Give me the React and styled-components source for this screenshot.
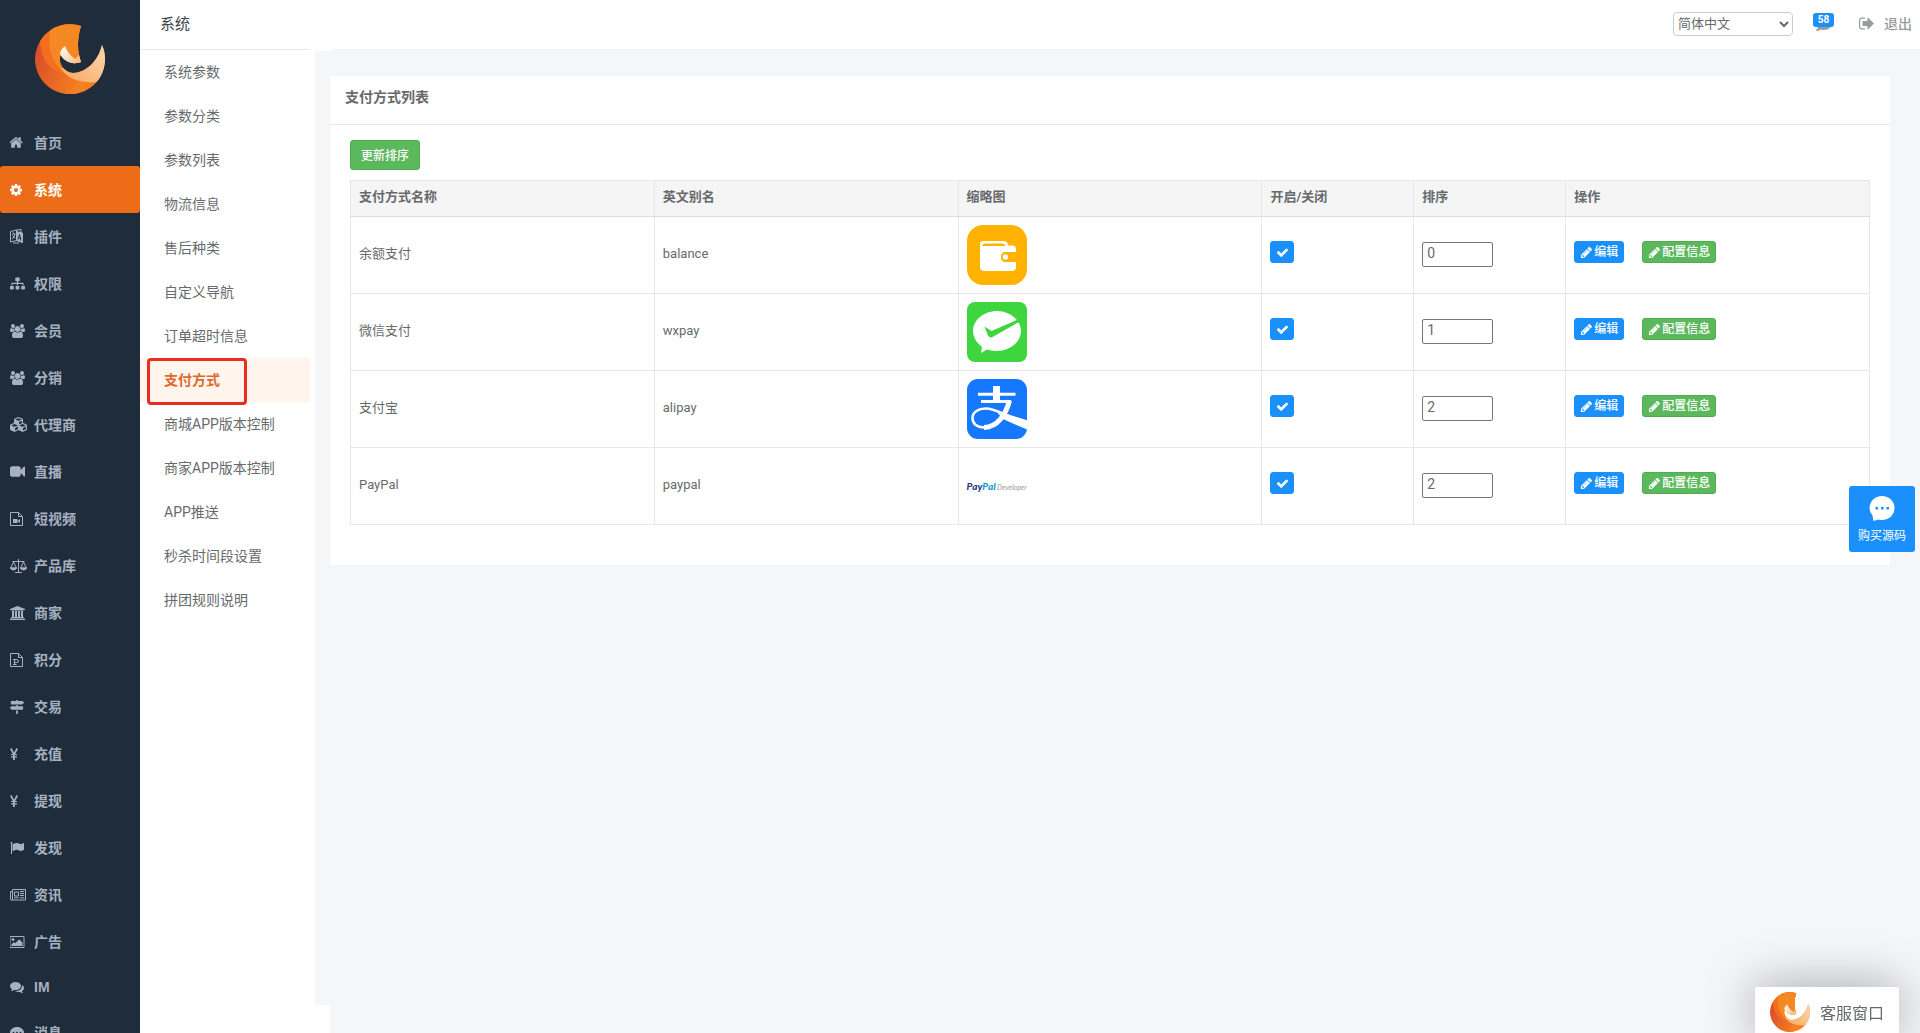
import React, { useState } from "react";
import styled, { createGlobalStyle, css } from "styled-components";
import { FaCommentDots, FaCubes, FaMapSigns, FaSitemap } from "react-icons/fa";

const GlobalStyle = createGlobalStyle`
  *, *::after {
    box-sizing: border-box;
  }
  body {
    margin: 0;
    background: #fff;
    color: #676a6c;
    font-family: Roboto, "Noto Sans CJK SC", sans-serif;
    font-size: 13px;
    line-height: 20px;
  }
  button, input, select {
    font-family: inherit;
    color: inherit;
  }
  a {
    color: inherit;
    text-decoration: none;
  }
`;

const Layout = styled.div`
  display: flex;
  height: 100vh;
  overflow: hidden;
`;

/* 左侧主菜单 */
const Sidebar = styled.nav`
  flex: none;
  width: 140px;
  overflow: hidden;
  background: #1f2c3c;
`;
const LogoBox = styled.div`
  display: flex;
  justify-content: center;
  padding: 24px 0 25px;
`;
const MenuList = styled.ul`
  margin: 0;
  padding: 0;
  list-style: none;
`;
const MenuLink = styled.a`
  display: flex;
  align-items: center;
  height: ${({ $short }) => ($short ? "44px" : "47px")};
  padding-left: 10px;
  border-radius: 3px;
  color: #a7b1c2;
  font-family: "Liberation Sans", "Noto Sans CJK SC", sans-serif;
  font-size: 14px;
  font-weight: 700;
  ${({ $active }) =>
    $active &&
    css`
      background: #ec6c18;
      color: #fff;
    `}
`;
const MenuIcon = styled.span`
  display: flex;
  width: 24px;
`;

/* 二级菜单 */
const SubNav = styled.nav`
  flex: none;
  width: 175px;
  padding-right: 5px;
`;
const SubTitle = styled.h2`
  margin: 0;
  height: 50px;
  padding: 9px 20px 10px;
  border-bottom: 1px solid #e7eaec;
  color: #40454c;
  font-size: 15px;
  font-weight: 400;
  line-height: 30px;
`;
const SubLink = styled.a`
  position: relative;
  display: block;
  padding: 12px 0 12px 24px;
  font-size: 14px;
  line-height: 20px;
  ${({ $active }) =>
    $active &&
    css`
      background: #fff5ec;
      color: #dd6a2c;
      font-weight: 700;

      &::after {
        content: "";
        position: absolute;
        top: 0;
        left: 7px;
        width: 100px;
        height: 47px;
        border: 3px solid #e92d20;
        border-radius: 4px;
        z-index: 1;
      }
    `}
`;
const Gutter = styled.div`
  flex: none;
  width: 15px;
  margin: 51px 0 28px;
  background: #f5f6f8;
`;

const Main = styled.div`
  display: flex;
  flex: 1;
  flex-direction: column;
  min-width: 0;
  background: #f5f6f8;
`;
const TopBar = styled.header`
  display: flex;
  align-items: center;
  justify-content: flex-end;
  height: 49px;
  padding: 0 8px 2px 0;
  background: #fff;
`;
const LangSelect = styled.select`
  width: 120px;
  height: 24px;
  margin-right: 20px;
  border: 1px solid #ccc;
  border-radius: 4px;
  background: #fff;
  font-size: 13px;
`;
const Notice = styled.a`
  position: relative;
  display: flex;
  justify-content: center;
  width: 21px;
  height: 16px;
  margin-right: 25px;
  color: #999c9e;
`;
const Badge = styled.span`
  position: absolute;
  top: -3px;
  left: 0;
  width: 21px;
  border-radius: 3px;
  background: #1c8ff8;
  color: #fff;
  font-size: 10px;
  font-weight: 700;
  line-height: 14px;
  text-align: center;
`;
const Logout = styled.a`
  display: flex;
  align-items: center;
  gap: 10px;
  color: #999c9e;
  font-size: 14px;
  font-weight: 500;
`;

/* 列表卡片 */
const Card = styled.section`
  margin: 27px 30px 0 0;
  background: #fff;
`;
const CardTitle = styled.h1`
  margin: 0;
  padding: 11px 15px 17px;
  border-bottom: 1px solid #e7e7e7;
  font-size: 14px;
  font-weight: 700;
  line-height: 20px;
`;
const CardBody = styled.div`
  padding: 15px 20px 40px;
`;
const SortButton = styled.button`
  display: block;
  height: 30px;
  margin-bottom: 10px;
  padding: 0 10px 2px;
  border: 1px solid #4cae4c;
  border-radius: 3px;
  background: #5cb85c;
  color: #fff;
  font-size: 12px;
  font-weight: 500;
`;
const Table = styled.table`
  width: 100%;
  border-collapse: collapse;
  table-layout: fixed;
`;
const Th = styled.th`
  width: ${({ $width }) => $width};
  height: 36px;
  padding: 0 8px 3px;
  border: 1px solid #e7e7e7;
  border-bottom-color: #ddd;
  background: #f5f5f5;
  font-weight: 700;
  text-align: left;
`;
const Td = styled.td`
  height: 77px;
  padding: 8px;
  border: 1px solid #e7e7e7;
  vertical-align: middle;
`;
const Label = styled.div`
  padding-bottom: 3px;
`;
const Thumb = styled.svg`
  display: block;
  width: 60px;
  height: 60px;
`;
const PayPalMark = styled.div`
  display: flex;
  align-items: baseline;
  justify-content: space-between;
  width: 60px;
  font-family: Lato, sans-serif;
  font-style: italic;
  white-space: nowrap;

  b {
    color: #1f3b80;
    font-size: 10px;
    font-weight: 900;
  }
  b span {
    color: #199bd7;
  }
  small {
    color: #999;
    font-size: 7px;
  }
`;
const CheckLabel = styled.label`
  display: grid;
  place-items: center;
  width: 24px;
  height: 22px;
  margin-bottom: 6px;

  input {
    grid-area: 1 / 1;
    appearance: none;
    width: 24px;
    height: 22px;
    margin: 0;
    border: 1px solid #1a90fc;
    border-radius: 3px;
    background: #fff;
  }
  input:checked {
    background: #1a90fc;
  }
  svg {
    grid-area: 1 / 1;
    color: #fff;
    pointer-events: none;
  }
`;
const SortField = styled.div`
  padding-bottom: 2px;
`;
const SortInput = styled.input`
  display: block;
  width: 71px;
  height: 25px;
  padding: 0 4px 3px;
  border: 1px solid #767676;
  border-radius: 2px;
  font-size: 14px;
`;
const Actions = styled.div`
  display: flex;
  gap: 18px;
  padding-bottom: 6px;
`;
const ActionButton = styled.button`
  display: flex;
  align-items: center;
  height: 22px;
  padding: 0 5px;
  border: 1px solid ${({ $green }) => ($green ? "#4cae4c" : "#1a90fc")};
  border-radius: 3px;
  background: ${({ $green }) => ($green ? "#5cb85c" : "#1a90fc")};
  color: #fff;
  font-size: 12px;
  font-weight: 500;
  line-height: 18px;
  white-space: nowrap;

  svg {
    margin-right: 1px;
  }
`;

/* 悬浮按钮 */
const BuyButton = styled.button`
  position: fixed;
  top: 486px;
  right: 5px;
  display: flex;
  flex-direction: column;
  align-items: center;
  gap: 5px;
  width: 66px;
  height: 66px;
  padding: 10px 0 0;
  border: 0;
  border-radius: 3px;
  background: #1a90fc;
  color: #fff;
  font-size: 12px;
  line-height: 18px;
`;
const ServiceBox = styled.button`
  position: fixed;
  right: 21px;
  bottom: 0;
  display: flex;
  align-items: center;
  gap: 10px;
  width: 144px;
  height: 46px;
  padding: 3px 0 0 15px;
  border: 0;
  border-radius: 2px 2px 0 0;
  background: #fff;
  box-shadow: 0 0 50px rgba(0, 0, 0, 0.35);
  font-size: 16px;
`;

// font-awesome 4 的图标
const paths = {
  home: "M1408 992v480q0 26-19 45t-45 19h-384v-384h-256v384h-384q-26 0-45-19t-19-45v-480q0-1 .5-3t.5-3l575-474 575 474q1 2 1 6zm223-69l-62 74q-8 9-21 11h-3q-13 0-21-7l-692-577-692 577q-12 8-24 7-13-2-21-11l-62-74q-8-10-7-23.5t11-21.5l719-599q32-26 76-26t76 26l244 204v-195q0-14 9-23t23-9h192q14 0 23 9t9 23v408l219 182q10 8 11 21.5t-7 23.5z",
  cog: "M1152 896q0-106-75-181t-181-75-181 75-75 181 75 181 181 75 181-75 75-181zm512-109v222q0 12-8 23t-20 13l-185 28q-19 54-39 91 35 50 107 138 10 12 10 25t-9 23q-27 37-99 108t-94 71q-12 0-26-9l-138-108q-44 23-91 38-16 136-29 186-7 28-36 28h-222q-14 0-24.5-8.5t-11.5-21.5l-28-184q-49-16-90-37l-141 107q-10 9-25 9-14 0-25-11-126-114-165-168-7-10-7-23 0-12 8-23 15-21 51-66.5t54-70.5q-27-50-41-99l-183-27q-13-2-21-12.5t-8-23.5v-222q0-12 8-23t19-13l186-28q14-46 39-92-40-57-107-138-10-12-10-24 0-10 9-23 26-36 98.5-107.5t94.5-71.5q13 0 26 10l138 107q44-23 91-38 16-136 29-186 7-28 36-28h222q14 0 24.5 8.5t11.5 21.5l28 184q49 16 90 37l142-107q9-9 24-9 13 0 25 10 129 119 165 170 7 8 7 22 0 12-8 23-15 21-51 66.5t-54 70.5q26 50 41 98l183 28q13 2 21 12.5t8 23.5z",
  users: "M593 896q-162 5-265 128h-134q-82 0-138-40.5t-56-118.5q0-353 124-353 6 0 43.5 21t97.5 42.5 119 21.5q67 0 133-23-5 37-5 66 0 139 81 256zm1071 637q0 120-73 189.5t-194 69.5h-874q-121 0-194-69.5t-73-189.5q0-53 3.5-103.5t14-109 26.5-108.5 43-97.5 62-81 85.5-53.5 111.5-20q10 0 43 21.5t73 48 107 48 135 21.5 135-21.5 107-48 73-48 43-21.5q61 0 111.5 20t85.5 53.5 62 81 43 97.5 26.5 108.5 14 109 3.5 103.5zm-1024-1277q0 106-75 181t-181 75-181-75-75-181 75-181 181-75 181 75 75 181zm704 384q0 159-112.5 271.5t-271.5 112.5-271.5-112.5-112.5-271.5 112.5-271.5 271.5-112.5 271.5 112.5 112.5 271.5zm576 225q0 78-56 118.5t-138 40.5h-134q-103-123-265-128 81-117 81-256 0-29-5-66 66 23 133 23 59 0 119-21.5t97.5-42.5 43.5-21q124 0 124 353zm-128-609q0 106-75 181t-181 75-181-75-75-181 75-181 181-75 181 75 75 181z",
  video: "M1792 352v1088q0 42-39 59-13 5-25 5-27 0-45-19l-403-403v166q0 119-84.5 203.5t-203.5 84.5h-704q-119 0-203.5-84.5t-84.5-203.5v-704q0-119 84.5-203.5t203.5-84.5h704q119 0 203.5 84.5t84.5 203.5v165l403-402q18-19 45-19 12 0 25 5 39 17 39 59z",
  bank: "M960 0l960 384v128h-128q0 26-20.5 45t-48.5 19h-1526q-28 0-48.5-19t-20.5-45h-128v-128zm-704 640h256v768h128v-768h256v768h128v-768h256v768h128v-768h256v768h59q28 0 48.5 19t20.5 45v64h-1664v-64q0-26 20.5-45t48.5-19h59v-768zm1595 960q28 0 48.5 19t20.5 45v128h-1920v-128q0-26 20.5-45t48.5-19h1782z",
  flag: "M320 256q0 72-64 110v1266q0 13-9.5 22.5t-22.5 9.5h-64q-13 0-22.5-9.5t-9.5-22.5v-1266q-64-38-64-110 0-53 37.5-90.5t90.5-37.5 90.5 37.5 37.5 90.5zm1472 64v763q0 25-12.5 38.5t-39.5 27.5q-215 116-369 116-61 0-123.5-22t-108.5-48-115.5-48-142.5-22q-192 0-464 146-17 9-33 9-26 0-45-19t-19-45v-742q0-32 31-55 21-14 79-43 236-120 421-120 107 0 200 29t219 88q38 19 88 19 54 0 117.5-21t110-47 88-47 54.5-21q26 0 45 19t19 45z",
  picture: "M576 576q0 80-56 136t-136 56-136-56-56-136 56-136 136-56 136 56 56 136zm1024 384v448h-1408v-192l320-320 160 160 512-512zm96-704h-1600q-13 0-22.5 9.5t-9.5 22.5v1216q0 13 9.5 22.5t22.5 9.5h1600q13 0 22.5-9.5t9.5-22.5v-1216q0-13-9.5-22.5t-22.5-9.5zm160 32v1216q0 66-47 113t-113 47h-1600q-66 0-113-47t-47-113v-1216q0-66 47-113t113-47h1600q66 0 113 47t47 113z",
  comments: "M1408 768q0 139-94 257t-256.5 186.5-353.5 68.5q-86 0-176-16-124 88-278 128-36 9-86 16h-3q-11 0-20.5-8t-11.5-21q-1-3-1-6.5t.5-6.5 2-6l2.5-5 3.5-5.5 4-5 4.5-5 4-4.5q5-6 23-25t26-29.5 22.5-29 25-38.5 20.5-44q-124-72-195-177t-71-224q0-139 94-257t256.5-186.5 353.5-68.5 353.5 68.5 256.5 186.5 94 257zm384 256q0 120-71 224.5t-195 176.5q10 24 20.5 44t25 38.5 22.5 29 26 29.5 23 25q1 1 4 4.5t4.5 5 4 5 3.5 5.5l2.5 5 2 6 .5 6.5-1 6.5q-3 14-13 22t-22 7q-50-7-86-16-154-40-278-128-90 16-176 16-271 0-472-132 58 4 88 4 161 0 309-45t264-129q125-92 192-212t67-254q0-77-23-152 129 71 204 178t75 230z",
  signOut: "M704 1440q0 4 1 20t.5 26.5-3 23.5-10 19.5-20.5 6.5h-320q-119 0-203.5-84.5t-84.5-203.5v-704q0-119 84.5-203.5t203.5-84.5h320q13 0 22.5 9.5t9.5 22.5q0 4 1 20t.5 26.5-3 23.5-10 19.5-20.5 6.5h-320q-66 0-113 47t-47 113v704q0 66 47 113t113 47h312l11.5 1 11.5 3 8 5.5 7 9 2 13.5zm928-544q0 26-19 45l-544 544q-19 19-45 19t-45-19-19-45v-288h-448q-26 0-45-19t-19-45v-384q0-26 19-45t45-19h448v-288q0-26 19-45t45-19 45 19l544 544q19 19 19 45z",
  pencil: "M491 1536l91-91-235-235-91 91v107h128v128h107zm523-928q0-22-22-22-10 0-17 7l-542 542q-7 7-7 17 0 22 22 22 10 0 17-7l542-542q7-7 7-17zm-54-192l416 416-832 832h-416v-416zm683 96q0 53-37 90l-166 166-416-416 166-165q36-38 90-38 53 0 91 38l235 234q37 39 37 91z",
  check: "M1671 566q0 40-28 68l-724 724-136 136q-28 28-68 28t-68-28l-136-136-362-362q-28-28-28-68t28-68l136-136q28-28 68-28t68 28l294 295 656-657q28-28 68-28t68 28l136 136q28 28 28 68z",
};

const Icon = ({ name, size = 14, left = 0, wide = 1792 }) => (
  <svg
    width={Math.round((size * wide) / 1792)}
    height={size}
    viewBox={`${left} 0 ${wide} 1792`}
    fill="currentColor"
    aria-hidden="true"
  >
    <path d={paths[name]} />
  </svg>
);

const LineIcon = ({ width, height = 14, children }) => (
  <svg
    width={width}
    height={height}
    viewBox={`0 0 ${width} ${height}`}
    fill="none"
    stroke="currentColor"
    aria-hidden="true"
  >
    {children}
  </svg>
);

const LanguageIcon = () => (
  <LineIcon width={13} height={15}>
    <path d="M.5 2.5 6.5 1v10.500L.5 13z" />
    <path d="M2 5h3.500M3.500 3.500V5M5 5Q4.500 8.500 2 10M2.500 6.500 5 9.500" />
    <path d="M6.500 2.500 12.500 4v9.500l-6-2z" fill="currentColor" />
    <path d="m8 10.500 1.500-5 1.500 6M8.500 9l2 .5" stroke="#1f2c3c" />
    <path d="M6.500 1 11 .5v3M3 14h6" />
  </LineIcon>
);

const ScaleIcon = () => (
  <LineIcon width={17}>
    <path d="M2.500 2.500h12M8.500 0v13M5 13.500h7" />
    <path d="M3.500 3 .5 9h6zM13.500 3l-3 6h6z" />
    <path d="M.5 9q.5 2 3 2t3-2zM10.500 9q.5 2 3 2t3-2z" fill="currentColor" />
  </LineIcon>
);

const FileVideoIcon = () => (
  <LineIcon width={13}>
    <path d="M.5.5h8l4 4v9H.5zM8.500.5v4h4" />
    <path d="M3 7h4.500v4H3zM7.500 9l2.500-2v4z" fill="currentColor" stroke="none" />
  </LineIcon>
);

const FilePointIcon = () => (
  <LineIcon width={13}>
    <path d="M.5.5h8l4 4v9H.5zM8.500.5v4h4" />
    <path d="M3 6.500h3.500q2 0 2 1.500t-2 1.500H5M4.500 6.500v5M3 11.500h3.500" />
  </LineIcon>
);

const YenIcon = () => (
  <LineIcon width={8} height={12}>
    <path d="M.7.5 4 6.500 7.300.5M4 6v6" strokeWidth="1.800" />
    <path d="M1 6.500h6M1 8.800h6" strokeWidth="1.200" />
  </LineIcon>
);

const NewsIcon = () => (
  <LineIcon width={16} height={12}>
    <path d="M2.500.5h13v10.500h-14Q.5 11 .5 10V2.500h2M2.500.5V10q0 1-1 1" />
    <path d="M4.500 3h4v4h-4zM10 2.500h4M10 4.500h4M10 6.500h4M4 8.800h4.500M10 8.800h4" />
  </LineIcon>
);

const Logo = ({ size, id }) => (
  <svg width={size} height={size} viewBox="0 0 70 70" role="img" aria-label="logo">
    <defs>
      <linearGradient id={`${id}-base`} x1="0" y1="0.4" x2="1" y2="0.8">
        <stop offset="0" stopColor="#db4b2b" />
        <stop offset="0.7" stopColor="#f58020" />
      </linearGradient>
      <linearGradient id={`${id}-tail`} x1="0" y1="1" x2="1" y2="0">
        <stop offset="0" stopColor="#f9a55a" />
        <stop offset="0.7" stopColor="#fad0a4" />
        <stop offset="1" stopColor="#fbdcbc" />
      </linearGradient>
      <linearGradient id={`${id}-wedge`} x1="0" y1="0" x2="1" y2="1">
        <stop offset="0.3" stopColor="#fdeedd" />
        <stop offset="1" stopColor="#f9b878" />
      </linearGradient>
      <clipPath id={`${id}-clip`}>
        <path d="M46 2A35 35 0 1 0 67 21C63 38 50 49 38 49C28 48 22 38 26 30C30 38 38 41 46 38C42 28 42 14 46 2Z" />
      </clipPath>
    </defs>
    <g clipPath={`url(#${id}-clip)`}>
      <rect width="70" height="70" fill={`url(#${id}-base)`} />
      <path d="M5 16C5 34 14 46 28 50L50 40V0H10Z" fill="#f26f1f" />
      <path d="M15 6C12 24 17 39 29 49L50 40V0H15Z" fill="#f48822" />
      <path d="M26 45C34 56 46 59 61 58L75 50V10H62L36 40Z" fill={`url(#${id}-tail)`} />
    </g>
    <path d="M30 22C27 24 25 27 25 30C29 38 37 41 46 38C39 35 33 30 30 22Z" fill={`url(#${id}-wedge)`} />
  </svg>
);

const BalanceThumb = () => (
  <Thumb viewBox="0 0 60 60" role="img" aria-label="余额支付">
    <rect width="60" height="60" rx="16" fill="#ffb300" />
    <path d="M16 16h20q5 0 5 4.500h4q4 0 4 4V27H39q-5 0-5 5t5 5h10v5q0 4-4 4H17q-4 0-4-4V20q0-4 3-4z" fill="#fff" />
    <path d="M15 21q.5-2.500 3-2.500h17q3 0 3.500 2.500z" fill="#ffb300" />
    <path d="M39 27.500h10v9H39q-5 0-5-4.500t5-4.500z" fill="#ffb300" />
    <circle cx="38.500" cy="32" r="2.700" fill="#fff" />
  </Thumb>
);

const WechatThumb = () => (
  <Thumb viewBox="0 0 60 60" role="img" aria-label="微信支付">
    <rect width="60" height="60" rx="8" fill="#3ed63e" />
    <path d="M30 9C17 9 6 18 6 29q0 9 9 16l-1 6 6-3.500Q25 49 30 49c13 0 24-9 24-20S43 9 30 9z" fill="#fff" />
    <path d="M17.500 24.500 24.500 29 51 17.500l1 2.500L25.500 35q-3 1.500-4.500-1.500z" fill="#3ed63e" />
  </Thumb>
);

const AlipayThumb = () => (
  <Thumb viewBox="0 0 60 60" role="img" aria-label="支付宝">
    <defs>
      <clipPath id="alipay-clip">
        <rect width="60" height="60" rx="11" />
      </clipPath>
    </defs>
    <g clipPath="url(#alipay-clip)">
      <rect width="60" height="60" fill="#1677ff" />
      <g fill="none" stroke="#fff">
        <path d="M29.500 7v16" strokeWidth="7" />
        <path d="M11 15.300h37.500M14 22.500h30" strokeWidth="3" />
        <path d="M42.500 21.500C39 35 31 48 17 48.500" strokeWidth="5" />
        <path d="M19 48.500C9 49 5.500 44 5.500 39c0-6 6-9.500 13-9.500 8 0 15 4 23 7.500" strokeWidth="2.500" />
      </g>
      <path d="M28 31 62 42v9.500L36 40z" fill="#fff" />
    </g>
  </Thumb>
);

const PaypalThumb = () => (
  <PayPalMark>
    <b>
      Pay<span>Pal</span>
    </b>
    <small>Developer</small>
  </PayPalMark>
);

const menus = [
  { name: "首页", icon: <Icon name="home" size={15} left={128} wide={1536} /> },
  { name: "系统", icon: <Icon name="cog" left={128} wide={1536} />, active: true },
  { name: "插件", icon: <LanguageIcon /> },
  { name: "权限", icon: <FaSitemap size={15} /> },
  { name: "会员", icon: <Icon name="users" wide={1920} /> },
  { name: "分销", icon: <Icon name="users" wide={1920} /> },
  { name: "代理商", icon: <FaCubes size={17} /> },
  { name: "直播", icon: <Icon name="video" size={15} /> },
  { name: "短视频", icon: <FileVideoIcon /> },
  { name: "产品库", icon: <ScaleIcon /> },
  { name: "商家", icon: <Icon name="bank" wide={1920} /> },
  { name: "积分", icon: <FilePointIcon /> },
  { name: "交易", icon: <FaMapSigns size={14} /> },
  { name: "充值", icon: <YenIcon /> },
  { name: "提现", icon: <YenIcon /> },
  { name: "发现", icon: <Icon name="flag" /> },
  { name: "资讯", icon: <NewsIcon /> },
  { name: "广告", icon: <Icon name="picture" wide={1920} /> },
  { name: "IM", icon: <Icon name="comments" />, short: true },
  { name: "消息", icon: <FaCommentDots size={14} /> },
];

const subMenus = [
  "系统参数",
  "参数分类",
  "参数列表",
  "物流信息",
  "售后种类",
  "自定义导航",
  "订单超时信息",
  "支付方式",
  "商城APP版本控制",
  "商家APP版本控制",
  "APP推送",
  "秒杀时间段设置",
  "拼团规则说明",
];

const columns = [
  ["支付方式名称", "20%"],
  ["英文别名", "20%"],
  ["缩略图", "20%"],
  ["开启/关闭", "10%"],
  ["排序", "10%"],
  ["操作", "20%"],
];

const payments = [
  { name: "余额支付", alias: "balance", sort: "0", Image: BalanceThumb },
  { name: "微信支付", alias: "wxpay", sort: "1", Image: WechatThumb },
  { name: "支付宝", alias: "alipay", sort: "2", Image: AlipayThumb },
  { name: "PayPal", alias: "paypal", sort: "2", Image: PaypalThumb },
];

// 表格的一行
const PaymentRow = ({ name, alias, sort, Image }) => {
  const [enabled, setEnabled] = useState(true);
  const [order, setOrder] = useState(sort);
  return (
    <tr>
      <Td><Label>{name}</Label></Td>
      <Td><Label>{alias}</Label></Td>
      <Td><Image /></Td>
      <Td>
        <CheckLabel>
          <input
            type="checkbox"
            aria-label={`开启${name}`}
            checked={enabled}
            onChange={(e) => setEnabled(e.target.checked)}
          />
          <Icon name="check" size={13} />
        </CheckLabel>
      </Td>
      <Td>
        <SortField>
          <SortInput
            type="text"
            aria-label={`${name}排序`}
            value={order}
            onChange={(e) => setOrder(e.target.value)}
          />
        </SortField>
      </Td>
      <Td>
        <Actions>
          <ActionButton type="button"><Icon name="pencil" size={13} />编辑</ActionButton>
          <ActionButton type="button" $green><Icon name="pencil" size={13} />配置信息</ActionButton>
        </Actions>
      </Td>
    </tr>
  );
};

export default function App() {
  return (
    <>
      <GlobalStyle />
      <Layout>
        <Sidebar>
          <LogoBox>
            <Logo size={70} id="side" />
          </LogoBox>
          <MenuList>
            {menus.map((menu) => (
              <li key={menu.name}>
                <MenuLink href="#" $active={menu.active} $short={menu.short}>
                  <MenuIcon>{menu.icon}</MenuIcon>
                  {menu.name}
                </MenuLink>
              </li>
            ))}
          </MenuList>
        </Sidebar>

        <SubNav>
          <SubTitle>系统</SubTitle>
          <MenuList>
            {subMenus.map((name) => (
              <li key={name}>
                <SubLink href="#" $active={name === "支付方式"}>{name}</SubLink>
              </li>
            ))}
          </MenuList>
        </SubNav>
        <Gutter />

        <Main>
          <TopBar>
            <LangSelect aria-label="语言">
              <option>简体中文</option>
            </LangSelect>
            <Notice href="#">
              <FaCommentDots size={16} />
              <Badge>58</Badge>
            </Notice>
            <Logout href="#">
              <Icon name="signOut" size={17} left={64} wide={1600} />
              退出
            </Logout>
          </TopBar>

          <Card>
            <CardTitle>支付方式列表</CardTitle>
            <CardBody>
              <SortButton type="button">更新排序</SortButton>
              <Table>
                <thead>
                  <tr>
                    {columns.map(([title, width]) => (
                      <Th key={title} $width={width}>{title}</Th>
                    ))}
                  </tr>
                </thead>
                <tbody>
                  {payments.map((item) => (
                    <PaymentRow key={item.alias} {...item} />
                  ))}
                </tbody>
              </Table>
            </CardBody>
          </Card>
        </Main>
      </Layout>

      <BuyButton type="button">
        <svg width="26" height="26" viewBox="0 0 26 26" aria-hidden="true">
          <path d="M13 0C6 0 .5 5.500.5 12q0 4 3 7.500L4.500 25l5-1.500q2 .5 3.500.5c7 0 12.500-5 12.500-12S20 0 13 0z" fill="#fff" />
          <path d="M6.500 11h2.500v2.500H6.500zM12 11h2.500v2.500H12zM17.500 11H20v2.500h-2.500z" fill="#1a90fc" />
        </svg>
        购买源码
      </BuyButton>
      <ServiceBox type="button">
        <Logo size={40} id="service" />
        客服窗口
      </ServiceBox>
    </>
  );
}
